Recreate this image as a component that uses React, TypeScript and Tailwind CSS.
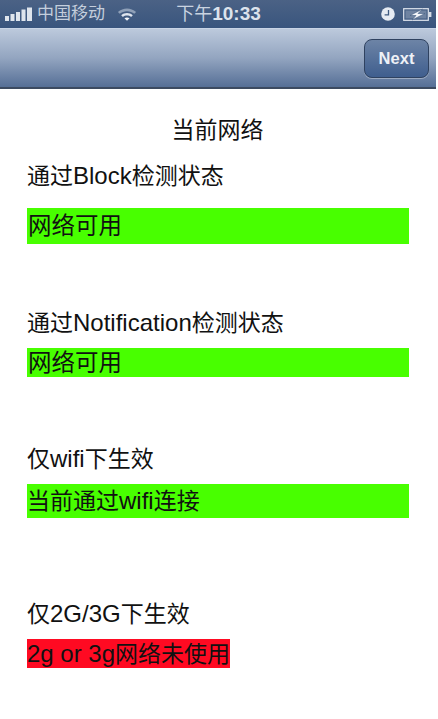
import React from 'react';

const font = 'font-["Liberation_Sans","Noto_Sans_CJK_SC",sans-serif]';

function Signal() {
  return (
    <svg width="28" height="15" viewBox="0 0 28 15" className="block">
      <rect x="0" y="9" width="4" height="5" fill="#dfe5ed" />
      <rect x="5.5" y="7" width="4" height="7" fill="#dfe5ed" />
      <rect x="11" y="5" width="4" height="9" fill="#dfe5ed" />
      <rect x="16.5" y="2.5" width="4" height="11.5" fill="#dfe5ed" />
      <rect x="22" y="0.5" width="5" height="13.5" fill="#dfe5ed" />
    </svg>
  );
}

function Wifi() {
  return (
    <svg width="20" height="15" viewBox="0 0 22 16" className="block">
      <path d="M1 5.2C6.6 0 15.4 0 21 5.2L19 7.3C14.6 3.4 7.4 3.4 3 7.3Z" fill="#8fa0b8" />
      <path d="M4.6 8.8C8.2 5.6 13.8 5.6 17.4 8.8L15.5 10.7C13 8.6 9 8.6 6.5 10.7Z" fill="#dfe5ee" />
      <path d="M8.2 12.2C9.8 10.9 12.2 10.9 13.8 12.2L11 15Z" fill="#f2f5f9" />
    </svg>
  );
}

function Clock() {
  return (
    <svg width="14" height="14" viewBox="0 0 14 14" className="block">
      <circle cx="7" cy="7" r="6.8" fill="#e6ebf2" />
      <path d="M7.5 3V7.8H3.6" fill="none" stroke="#3f5a80" strokeWidth="1.3" />
    </svg>
  );
}

function Battery() {
  return (
    <svg width="29" height="13" viewBox="0 0 29 13" className="block">
      <rect x="0.7" y="0.7" width="24.6" height="11.6" fill="none" stroke="#dfe5ee" strokeWidth="1.2" />
      <rect x="2.5" y="2.5" width="21" height="8" fill="#6f83a1" />
      <rect x="26" y="4" width="2.4" height="5" fill="#d5dce6" />
      <path d="M19.5 1L7 7.5H13L9 12L22 5.5H15Z" fill="#f4f6fa" stroke="#3f5a80" strokeWidth="0.6" />
    </svg>
  );
}

function Latin({ children }: { children: React.ReactNode }) {
  return <span className="text-[24px]">{children}</span>;
}

export default function App() {
  return (
    <div className={`${font} w-[438px] h-[719px] overflow-hidden bg-white text-[#111] flex flex-col`}>
      {/* 状态栏 */}
      <div className="w-[436px] h-[28px] shrink-0 flex items-center justify-between pl-[5px] pr-[4px] bg-gradient-to-b from-[#4b6285] to-[#39557e]">
        <div className="flex items-center w-[150px]">
          <Signal />
          <span className="text-[17px] text-[#c4cedc] ml-[4px] whitespace-nowrap">中国移动</span>
          <div className="ml-[12px]"><Wifi /></div>
        </div>
        <span className="text-[19px] font-bold text-[#dde3ec] whitespace-nowrap">
          <span className="font-normal text-[18px] text-[#c9d3e0]">下午</span>10:33
        </span>
        <div className="flex items-center justify-end gap-[8px] w-[150px]">
          <Clock />
          <Battery />
        </div>
      </div>

      {/* 导航栏 */}
      <div className="w-[436px] h-[61px] shrink-0 flex items-center justify-end pr-[7px] border-t border-[#c8d4e6] border-b-2 border-b-[#3c4a60] bg-gradient-to-b from-[#bcc9dc] via-[#93a5c0] to-[#566f96]">
        <div className="w-[65px] h-[39px] flex items-center justify-center rounded-[8px] border border-[#2f4260] bg-gradient-to-b from-[#6d84a6] to-[#3f5e8e] text-[16.5px] font-bold text-[#eef1f6] shadow-[0_1px_0_rgba(255,255,255,0.35)]">
          Next
        </div>
      </div>

      {/* 内容 */}
      <div className="flex-1 text-[23px] leading-[30px] pl-[27px] pr-[29px]">
        <div className="mt-[26px] text-center -ml-[1px]">当前网络</div>
        <div className="mt-[16px]">通过<Latin>Block</Latin>检测状态</div>
        <div className="mt-[17px] h-[36px] bg-[#48ff00] flex items-center pl-[1px] text-[23.5px]">网络可用</div>
        <div className="mt-[64px]">通过<Latin>Notification</Latin>检测状态</div>
        <div className="mt-[10px] h-[29px] bg-[#48ff00] flex items-center pl-[1px] text-[23.5px]">网络可用</div>
        <div className="mt-[67px]">仅<Latin>wifi</Latin>下生效</div>
        <div className="mt-[10px] h-[34px] bg-[#48ff00] flex items-center">当前通过<Latin>wifi</Latin>连接</div>
        <div className="mt-[81px]">仅<Latin>2G/3G</Latin>下生效</div>
        <div className="mt-[10px] w-[203px] h-[29px] bg-[#ff0a22] flex items-center whitespace-nowrap">
          <span><Latin>2g or 3g</Latin>网络未使用</span>
        </div>
      </div>
    </div>
  );
}
